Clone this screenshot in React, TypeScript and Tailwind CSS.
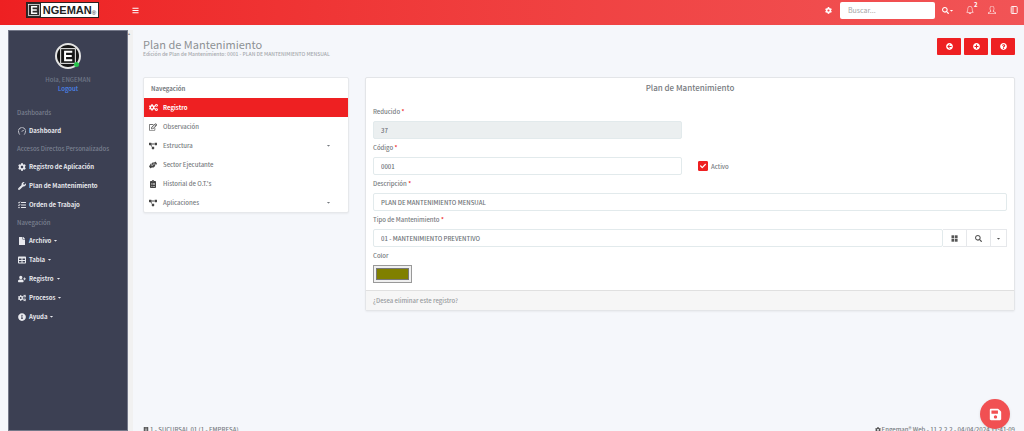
import type { ReactNode } from "react";
import {
  FaArrowCircleLeft,
  FaBars,
  FaBuilding,
  FaCaretDown,
  FaCheck,
  FaClipboardList,
  FaCog,
  FaCogs,
  FaFile,
  FaHandsHelping,
  FaInfoCircle,
  FaPlusCircle,
  FaProjectDiagram,
  FaQuestionCircle,
  FaRegEdit,
  FaSave,
  FaSearch,
  FaTable,
  FaTasks,
  FaUserPlus,
  FaWrench,
} from "react-icons/fa";
import { SlBell, SlSpeedometer, SlUser } from "react-icons/sl";

type MenuItem = {
  label: string;
  icon: ReactNode;
  caret?: boolean;
  active?: boolean;
};

type MenuSection = {
  title: string;
  items: MenuItem[];
};

const sections: MenuSection[] = [
  {
    title: "Dashboards",
    items: [{ label: "Dashboard", icon: <SlSpeedometer /> }],
  },
  {
    title: "Accesos Directos Personalizados",
    items: [
      { label: "Registro de Aplicación", icon: <FaCog /> },
      { label: "Plan de Mantenimiento", icon: <FaWrench /> },
      { label: "Orden de Trabajo", icon: <FaTasks /> },
    ],
  },
  {
    title: "Navegación",
    items: [
      { label: "Archivo", icon: <FaFile />, caret: true },
      { label: "Tabla", icon: <FaTable />, caret: true },
      { label: "Registro", icon: <FaUserPlus />, caret: true },
      { label: "Procesos", icon: <FaCogs />, caret: true },
      { label: "Ayuda", icon: <FaInfoCircle />, caret: true },
    ],
  },
];

const tabs: MenuItem[] = [
  { label: "Registro", icon: <FaCogs />, active: true },
  { label: "Observación", icon: <FaRegEdit /> },
  { label: "Estructura", icon: <FaProjectDiagram />, caret: true },
  { label: "Sector Ejecutante", icon: <FaHandsHelping /> },
  { label: "Historial de O.T.'s", icon: <FaClipboardList /> },
  { label: "Aplicaciones", icon: <FaProjectDiagram />, caret: true },
];

const inputClass =
  "h-[18px] w-full min-w-0 rounded-xs border border-[#e2eaec] px-[7px] text-[6px] font-medium text-[#6b7075] outline-none";

function Header() {
  return (
    <header className="flex h-[25px] shrink-0 items-start bg-linear-to-r from-[#ee2022] to-[#f15456] text-white">
      <div className="flex h-5 flex-1 items-center">
        <a
          href="#"
          className="ml-[26px] flex h-4 w-[73px] items-center border border-[#2b2020] bg-white font-['Liberation_Sans'] text-[11px] font-bold text-[#222]"
        >
          <span className="flex h-full w-[14px] shrink-0 items-center justify-center bg-[#2b2b2b]">
            <LetterMark className="h-3 w-3" />
          </span>
          <span className="flex flex-1 items-end justify-center leading-none">
            NGEMAN<span className="text-[6px] font-normal">®</span>
          </span>
        </a>
        <button aria-label="Menú" className="ml-[33px] text-[7px]">
          <FaBars />
        </button>
      </div>
      <div className="flex h-5 items-center pr-[6px] text-[8px]">
        <button aria-label="Configuración" className="mr-2 text-[7px]">
          <FaCog />
        </button>
        <input
          type="search"
          aria-label="Buscar"
          placeholder="Buscar..."
          className="h-[17px] w-[95px] rounded-xs bg-white px-2 text-[7px] text-gray-600 outline-none placeholder:text-[#a5a5a5]"
        />
        <button aria-label="Opciones de búsqueda" className="ml-[7px] flex items-center text-[7px]">
          <FaSearch />
          <FaCaretDown className="text-[5px]" />
        </button>
        <button aria-label="Notificaciones" className="relative ml-3">
          <SlBell />
          <span className="absolute -top-1 left-2 text-[6px] leading-none font-bold">2</span>
        </button>
        <button aria-label="Usuario" className="ml-[14px]">
          <SlUser />
        </button>
        <button aria-label="Panel lateral" className="ml-[14px]">
          <svg viewBox="0 0 8 8" className="h-2 w-2" fill="none" stroke="currentColor">
            <rect x="1.2" y="0.5" width="6" height="7" rx="0.8" strokeWidth="0.9" />
            <path d="M3 0.5v7" strokeWidth="0.9" />
          </svg>
        </button>
      </div>
    </header>
  );
}

// Framed "E" shared by the brand and the avatar
function LetterMark({ className }: { className: string }) {
  return (
    <svg viewBox="0 0 12 12" className={className} fill="none" stroke="#fff">
      <rect x="0.5" y="0.5" width="11" height="11" strokeWidth="0.7" />
      <path d="M9.2 2.8H3.8v6.4H9.2M3.8 6H8.8" strokeWidth="1.5" />
    </svg>
  );
}

function GridIcon() {
  return (
    <svg viewBox="0 0 7 7" className="size-[7px]" fill="currentColor">
      <rect x="0.5" y="0.3" width="2.7" height="2.9" />
      <rect x="3.9" y="0.3" width="2.7" height="2.9" />
      <rect x="0.5" y="3.8" width="2.7" height="2.9" />
      <rect x="3.9" y="3.8" width="2.7" height="2.9" />
    </svg>
  );
}

function Sidebar() {
  return (
    <aside className="w-[120px] shrink-0 border border-[#747889] bg-[#3c4053] text-[6px] text-white">
      <div className="flex h-[73px] flex-col items-center pt-3 leading-[9px]">
        <div className="relative mb-[6px] flex size-[26px] shrink-0 items-center justify-center rounded-full border-2 border-[#e4e4e4] bg-[#161616]">
          <LetterMark className="h-4 w-4" />
          <span className="absolute right-0 bottom-0 size-[5px] rounded-full bg-[#27c24c]" />
        </div>
        <span className="font-medium text-[#707888]">Hola, ENGEMAN</span>
        <a href="#" className="font-medium text-[#4b86f0]">
          Logout
        </a>
      </div>
      <nav>
        {sections.map((section) => (
          <div key={section.title}>
            <h2 className="flex h-[17px] items-center px-2 font-medium whitespace-nowrap text-[#7b8091]">{section.title}</h2>
            <ul>
              {section.items.map((item) => (
                <li key={item.label}>
                  <a href="#" className="flex h-[19px] items-center gap-[2px] px-2 font-bold text-[#e8e9ee]">
                    <span className="flex w-[10px] justify-center text-[8px]">{item.icon}</span>
                    {item.label}
                    {item.caret && <FaCaretDown className="text-[5px]" />}
                  </a>
                </li>
              ))}
            </ul>
          </div>
        ))}
      </nav>
    </aside>
  );
}

function TabList() {
  return (
    <section className="self-start rounded-xs border border-[#e6e8eb] bg-white text-[6px] font-medium shadow-xs">
      <h2 className="flex h-5 items-center px-[7px] font-bold">Navegación</h2>
      <ul>
        {tabs.map((tab) => (
          <li key={tab.label}>
            <a
              href="#"
              className={
                tab.active
                  ? "flex h-[19px] items-center gap-[5px] bg-[#ee2022] px-1 font-bold text-white"
                  : "flex h-[19px] items-center gap-[5px] px-1"
              }
            >
              <span className={tab.active ? "flex w-[10px] justify-center text-[9px]" : "flex w-[10px] justify-center text-[8px] text-[#444]"}>
                {tab.icon}
              </span>
              <span className="flex-1">{tab.label}</span>
              {tab.caret && <FaCaretDown className="mr-[13px] text-[5px]" />}
            </a>
          </li>
        ))}
      </ul>
    </section>
  );
}

type FieldProps = {
  id: string;
  label: string;
  required?: boolean;
  children: ReactNode;
};

function Field({ id, label, required, children }: FieldProps) {
  return (
    <div className="flex flex-col gap-[3px]">
      <label htmlFor={id} className="text-[6px] leading-3 font-medium">
        {label} {required && <span className="text-[#ee2022]">*</span>}
      </label>
      {children}
    </div>
  );
}

function PlanForm() {
  const addonClass = "flex h-[18px] items-center justify-center border border-l-0 border-[#e6e8eb] text-[#555]";

  return (
    <form className="col-span-3 rounded-xs border border-[#e3e5e8] bg-white shadow-xs">
      <h2 className="pt-[2px] text-center text-[8px] leading-4 font-medium">Plan de Mantenimiento</h2>
      <div className="flex flex-col gap-[3px] px-[7px] pt-[10px] pb-[7px]">
        <div className="grid grid-cols-2 gap-4">
          <Field id="reducido" label="Reducido" required>
            <input id="reducido" disabled defaultValue="37" className={`${inputClass} bg-[#ebeff0]`} />
          </Field>
        </div>
        <div className="grid grid-cols-2 gap-4">
          <Field id="codigo" label="Código" required>
            <input id="codigo" defaultValue="0001" className={inputClass} />
          </Field>
          <label className="flex h-[18px] items-center gap-[3px] self-end text-[6px] font-medium">
            <span className="relative size-[10px]">
              <input
                type="checkbox"
                defaultChecked
                className="peer block size-[10px] appearance-none rounded-[1px] border border-[#ee2022] checked:bg-[#ee2022]"
              />
              <FaCheck className="pointer-events-none absolute inset-0 m-auto hidden text-[6px] text-white peer-checked:block" />
            </span>
            Activo
          </label>
        </div>
        <Field id="descripcion" label="Descripción" required>
          <input id="descripcion" defaultValue="PLAN DE MANTENIMIENTO MENSUAL" className={inputClass} />
        </Field>
        <Field id="tipo" label="Tipo de Mantenimiento" required>
          <div className="flex">
            <input id="tipo" defaultValue="01 - MANTENIMIENTO PREVENTIVO" className={inputClass} />
            <button type="button" aria-label="Lista" className={`${addonClass} w-6 shrink-0`}>
              <GridIcon />
            </button>
            <button type="button" aria-label="Buscar tipo" className={`${addonClass} w-6 shrink-0 text-[7px]`}>
              <FaSearch />
            </button>
            <button type="button" aria-label="Más opciones" className={`${addonClass} w-4 shrink-0 text-[5px]`}>
              <FaCaretDown />
            </button>
          </div>
        </Field>
        <Field id="color" label="Color">
          <input
            id="color"
            type="color"
            defaultValue="#808000"
            className="h-[18px] w-[39px] border border-[#999] bg-[#efefef] p-[2px] [&::-webkit-color-swatch]:border-[#777] [&::-webkit-color-swatch-wrapper]:p-0"
          />
        </Field>
      </div>
      <footer className="flex h-[20px] items-center border-t border-[#e0e0e0] bg-[#f6f6f6] px-[7px] text-[6px] font-medium text-[#979a9d]">
        ¿Desea eliminar este registro?
      </footer>
    </form>
  );
}

export default function App() {
  const actionClass = "flex h-[17px] w-6 items-center justify-center rounded-[1px] bg-[#ee2022] text-[7px] text-white";

  return (
    <div className="flex h-screen flex-col overflow-hidden bg-[#f5f7fb] font-['Noto_Sans_CJK_SC',sans-serif] text-[#777b80]">
      <Header />
      <div className="flex min-h-0 flex-1 pt-[5px] pl-2">
        <Sidebar />
        <div className="w-[5px] shrink-0 bg-[#f1f1f1] text-[4px] text-[#888]">▴</div>
        <main className="flex min-w-0 flex-1 flex-col pr-[9px] pl-[10px]">
          <div className="mb-[19px] flex items-start justify-between pt-2">
            <div>
              <h1 className="text-[11px] leading-[12px] text-[#8d9194]">Plan de Mantenimiento</h1>
              <p className="text-[5px] leading-[8px] font-medium text-[#a5a9ad]">
                Edición de Plan de Mantenimiento: 0001 - PLAN DE MANTENIMIENTO MENSUAL
              </p>
            </div>
            <div className="flex gap-[3px]">
              <button aria-label="Volver" className={actionClass}>
                <FaArrowCircleLeft />
              </button>
              <button aria-label="Agregar" className={actionClass}>
                <FaPlusCircle />
              </button>
              <button aria-label="Ayuda" className={actionClass}>
                <FaQuestionCircle />
              </button>
            </div>
          </div>
          <div className="grid grid-cols-4 gap-4">
            <TabList />
            <PlanForm />
          </div>
          <footer className="mt-auto -mb-1 flex justify-between text-[6px] leading-[10px] font-medium">
            <span className="flex items-center gap-px">
              <FaBuilding className="text-[#555]" /> 1 - SUCURSAL 01 (1 - EMPRESA)
            </span>
            <span className="flex items-center gap-px">
              <FaCog className="text-[#555]" /> Engeman® Web - 11.2.2.2 - 04/04/2024 11:41:09
            </span>
          </footer>
        </main>
      </div>
      <button
        aria-label="Guardar"
        className="fixed right-[14px] bottom-[2px] flex size-[30px] items-center justify-center rounded-full bg-[#f15052] text-[13px] text-white shadow"
      >
        <FaSave />
      </button>
    </div>
  );
}
